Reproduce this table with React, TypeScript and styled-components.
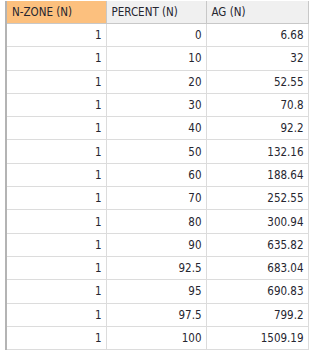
import React from 'react'
import styled, { createGlobalStyle } from 'styled-components'

const GlobalStyle = createGlobalStyle`
  body {
    margin: 0;
    background: #ffffff;
  }
`

const rows: [string, string, string][] = [
  ['1', '0', '6.68'],
  ['1', '10', '32'],
  ['1', '20', '52.55'],
  ['1', '30', '70.8'],
  ['1', '40', '92.2'],
  ['1', '50', '132.16'],
  ['1', '60', '188.64'],
  ['1', '70', '252.55'],
  ['1', '80', '300.94'],
  ['1', '90', '635.82'],
  ['1', '92.5', '683.04'],
  ['1', '95', '690.83'],
  ['1', '97.5', '799.2'],
  ['1', '100', '1509.19'],
]

const Wrapper = styled.div`
  padding: 1px 0 0 5px;
`

const Grid = styled.table`
  border-collapse: collapse;
  table-layout: fixed;
  border-left: 2px solid #b4b4b4;
  font-family: 'DejaVu Sans Condensed', 'DejaVu Sans', sans-serif;
  font-size: 11.5px;
  color: #262630;
`

const HeadCell = styled.th<{ $active?: boolean }>`
  height: 22px;
  padding: 0 0 0 5px;
  text-align: left;
  font-weight: normal;
  background: ${({ $active }) => ($active ? '#fcc07e' : '#f0f0f0')};
  border-right: 1px solid #c8c8c8;
  border-bottom: 1px solid #c8c8c8;
  white-space: nowrap;
`

const Cell = styled.td`
  height: 22.3px;
  padding: 0 4px 0 0;
  text-align: right;
  border-right: 1px solid #dcdcdc;
  border-bottom: 1px solid #dcdcdc;
  white-space: nowrap;
`

const App: React.FC = () => {
  return (
    <Wrapper>
      <GlobalStyle />
      <Grid>
        <colgroup>
          <col style={{ width: 100 }} />
          <col style={{ width: 100 }} />
          <col style={{ width: 102 }} />
        </colgroup>
        <thead>
          <tr>
            <HeadCell $active>N-ZONE (N)</HeadCell>
            <HeadCell>PERCENT (N)</HeadCell>
            <HeadCell>AG (N)</HeadCell>
          </tr>
        </thead>
        <tbody>
          {rows.map((r, i) => (
            <tr key={`row-${i}`}>
              <Cell>{r[0]}</Cell>
              <Cell>{r[1]}</Cell>
              <Cell>{r[2]}</Cell>
            </tr>
          ))}
        </tbody>
      </Grid>
    </Wrapper>
  )
}

export default App
